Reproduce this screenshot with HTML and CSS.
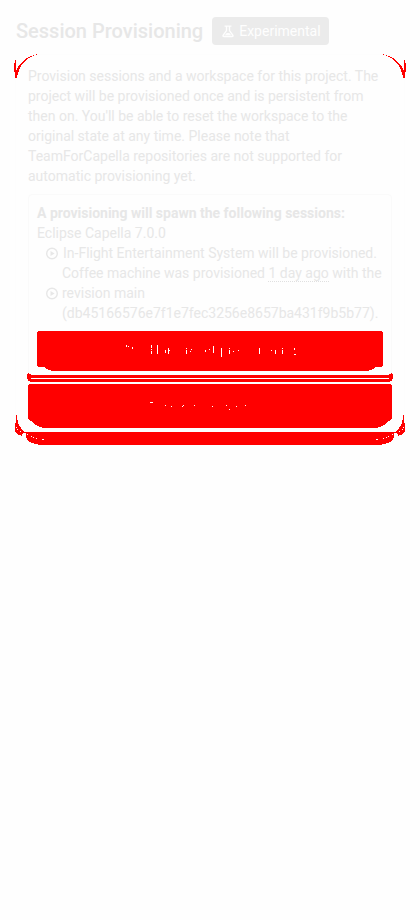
FILE: index.html
```
<!DOCTYPE html>
<html lang="en">
<head>
<meta charset="utf-8">
<title>Session Provisioning</title>
<link rel="stylesheet" href="styles.css">
</head>
<body>
<header class="header">
  <h1 class="title">Session Provisioning</h1>
  <span class="badge">
    <svg class="badge-icon" viewBox="0 0 18 18" width="18" height="18"><path fill="none" stroke="currentColor" stroke-width="1.3" stroke-linejoin="round" d="M5.6 4.2h6.800M7.500 4.500v4.200L4 13.500q-.3 1 .9 1h8.200q1.200 0 .9-1L10.500 8.700V4.500"/><path fill="currentColor" d="M7.600 11h2.800l1.800 2.300H5.800z"/></svg>
    <span>Experimental</span>
  </span>
</header>
<main class="card">
  <p class="intro">Provision sessions and a workspace for this project. The<br>project will be provisioned once and is persistent from<br>then on. You'll be able to reset the workspace to the<br>original state at any time. Please note that<br>TeamForCapella repositories are not supported for<br>automatic provisioning yet.</p>
  <section class="panel">
    <div class="strong">A provisioning will spawn the following sessions:</div>
    <div>Eclipse Capella 7.0.0</div>
    <div class="item">
      <svg class="item-icon" viewBox="0 0 14 14" width="14" height="14"><circle cx="7" cy="7.500" r="5.3" fill="none" stroke="currentColor" stroke-width="1.400"/><path fill="currentColor" d="M5.500 5v5L9.600 7.500z"/></svg>
      <span class="first">In-Flight Entertainment System will be provisioned.</span>
    </div>
    <div class="item">
      <svg class="item-icon" viewBox="0 0 14 14" width="14" height="14"><circle cx="7" cy="7.500" r="5.3" fill="none" stroke="currentColor" stroke-width="1.400"/><path fill="currentColor" d="M5.500 5v5L9.600 7.500z"/></svg>
      <span>Coffee machine was provisioned <span class="ago">1 day ago</span> with the<br>revision main<br>(db45166576e7f1e7fec3256e8657ba431f9b5b77).</span>
    </div>
  </section>
</main>
<svg class="marks" viewBox="0 0 420 920" width="420" height="920" shape-rendering="crispEdges">
  <g id="edges">
    <path d="M36 54h1v1h-1zM33 55h1v1h-1zM30 56h2v1h-2zM28 57h2v1h-2zM26 58h2v1h-2zM25 59h2v1h-2zM24 60h2v1h-2zM23 61h2v1h-2zM22 62h2v1h-2zM21 63h2v1h-2zM20 64h2v1h-2zM19 65h2v1h-2zM18 66h3v1h-3zM18 67h2v1h-2zM17 68h3v1h-3zM17 69h2v1h-2zM16 70h3v1h-3zM16 71h3v1h-3zM16 72h2v3h-2zM16 75h1v3h-1zM15 60h1v18h-1zM14 63h1v9h-1z"/>
    <path d="M16 415h1v5h-1zM16 420h2v3h-2zM15 423h3v1h-3zM15 424h4v2h-4zM15 426h5v1h-5zM15 427h6v2h-6zM15 429h7v1h-7zM15 430h8v1h-8zM15 431h9v1h-9zM16 432h10v1h-10zM17 433h6v1h-6zM18 434h4v1h-4zM21 435h1v1h-1z"/>
    <path d="M28 373h1v1h2v1h180v3h-180v1h180v3h-181v-1h-2v-2h-1v-5h1z"/>
    <path d="M38 331h173v40h-160v-1h-3v-1h-2v-1h-1v-1h-7v-1h-1v-34h1z"/>
    <path d="M29 384h182v44h-169v-1h-3v-1h-2v-1h-2v-1h-1v-1h-1v-1h-1v-1h-2v-1h-1v-1h-1v-34h1z"/>
    <path d="M26 432h185v13h-173v-1h-4v-1h-3v-1h-2v-1h-1v-1h-1v-2h-1v-4z"/>
    <path fill="#fff" d="M16 427h1v1h-1zM17 429h1v1h-1zM20 431h1v1h-1zM27 434h1v1h-1zM31 436h1v1h-1zM33 437h1v1h-1zM36 438h1v1h-1zM42 439h2v1h-2z"/>
  </g>
  <use href="#edges" transform="matrix(-1 0 0 1 420 0)"/>
  <path fill="#fff" d="M126 345h1v2h-1zM128 346h1v1h-1zM132 347h1v2h-1zM151 345h1v3h-1zM151 349h1v1h-1zM151 351h1v3h-1zM157 345h1v9h-1zM165 350h1v3h-1zM168 348h1v2h1v1h-1v3h-1zM186 348h1v1h-1zM186 350h1v4h-1zM190 351h1v1h-1zM191 349h1v1h-1zM205 350h1v2h-1zM209 349h1v1h-1zM213 346h1v7h-1zM221 348h1v9h-1zM229 348h1v1h-1zM229 350h1v4h-1zM233 351h1v1h-1zM238 350h1v1h-1zM259 348h1v6h-1zM271 350h1v1h-1zM275 350h1v4h-1zM282 348h1v1h-1zM282 350h1v4h-1zM294 348h1v2h-1zM294 354h2v1h-2zM150 402h3v1h-3zM165 405h1v1h-1zM171 406h1v1h-1zM183 405h1v1h-1zM182 406h1v1h-1zM194 405h1v1h-1zM212 406h1v1h-1zM226 405h1v1h-1zM229 409h1v1h-1zM236 406h1v1h-1zM245 405h1v1h-1z"/>
</svg>
</body>
</html>
```
FILE: styles.css
```
* { box-sizing: border-box; }
body {
  position: relative;
  width: 420px;
  height: 920px;
  margin: 0;
  padding: 17px 14px;
  overflow: hidden;
  background: #fefefe;
  color: #e7e7e7;
  font: 14px/20px Roboto, sans-serif;
}
.header {
  display: flex;
  align-items: center;
  gap: 9px;
  height: 28px;
  margin-left: 2px;
}
.title {
  margin: 0;
  font-size: 20px;
  line-height: 28px;
  font-weight: 500;
}
.badge {
  display: flex;
  align-items: center;
  gap: 2px;
  width: 117px;
  height: 28px;
  padding: 0 7px;
  border-radius: 4px;
  background: #ebebeb;
  color: #fefefe;
}
.badge-icon { display: block; }
.card {
  margin: 9px 1px 0;
  padding: 11px 12px;
  height: 391px;
  border: 1px solid #fdfdfd;
  border-radius: 24px;
  background: #fefefe;
}
.intro {
  margin: 0 0 8px;
  white-space: nowrap;
}
.panel {
  height: 188px;
  margin: 0;
  padding: 8px;
  border: 1px solid #fafafa;
  border-radius: 4px;
  white-space: nowrap;
}
.strong { font-weight: 700; }
.item {
  display: flex;
  align-items: center;
  gap: 3px;
  margin-left: 8px;
}
.item-icon { flex: none; }
.first { padding-left: 1px; }
.ago { border-bottom: 1px dotted #e0e0e0; }
.marks {
  position: absolute;
  top: 0;
  left: 0;
  fill: #f00;
  pointer-events: none;
}
```
